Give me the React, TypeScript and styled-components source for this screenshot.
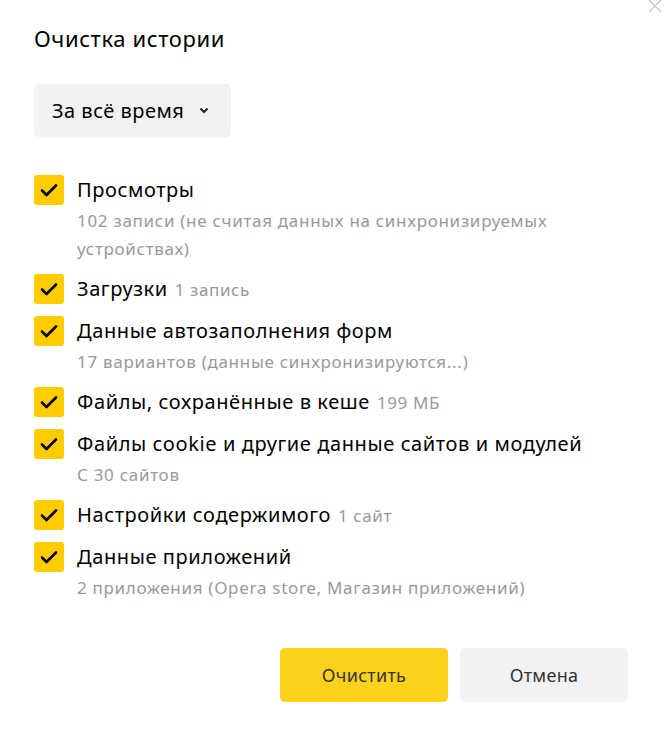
import React from "react";
import styled, { createGlobalStyle } from "styled-components";

const Global = createGlobalStyle`
  html, body { margin: 0; padding: 0; background: #fff; }
  body { font-family: "Noto Sans", "Open Sans", sans-serif; color: #000; }
`;

const Dialog = styled.div`
  position: relative;
  width: 670px;
  height: 733px;
  box-sizing: border-box;
  padding: 20px 42px 0 34px;
  display: flex;
  flex-direction: column;
`;

const Close = styled.button`
  position: absolute;
  top: -1px;
  right: 8px;
  width: 14px;
  height: 14px;
  padding: 0;
  border: 0;
  background: none;
  display: flex;
`;

const Title = styled.h1`
  margin: 0;
  font-size: 22px;
  font-weight: 400;
  line-height: 36px;
  letter-spacing: 0.6px;
`;

const Select = styled.button`
  margin-top: 28px;
  align-self: flex-start;
  height: 53px;
  width: 197px;
  box-sizing: border-box;
  padding: 0 18px;
  border: 0;
  border-radius: 5px;
  background: #f2f2f2;
  font-family: inherit;
  font-size: 20px;
  letter-spacing: 0.5px;
  color: #000;
  display: flex;
  align-items: center;
  gap: 15px;
`;

const List = styled.div`
  margin-top: 38px;
  display: flex;
  flex-direction: column;
  gap: 11px;
`;

const Row = styled.div`
  display: flex;
  gap: 13px;
  align-items: flex-start;
`;

const Box = styled.span`
  flex: none;
  width: 30px;
  height: 30px;
  border-radius: 3px;
  background: #ffcc00;
  display: flex;
  align-items: center;
  justify-content: center;
`;

const Texts = styled.div`
  display: flex;
  flex-direction: column;
`;

const Label = styled.div`
  font-size: 20px;
  line-height: 30px;
  color: #000;
  letter-spacing: 0.6px;
  white-space: nowrap;
`;

const Inline = styled.span`
  font-size: 17px;
  color: #999;
  letter-spacing: 0.6px;
  margin-left: 7px;
`;

const Sub = styled.div`
  margin-top: 2px;
  font-size: 17px;
  line-height: 28px;
  color: #999;
  letter-spacing: 0.7px;
  max-width: 490px;
`;

const Actions = styled.div`
  margin-top: 46px;
  display: flex;
  justify-content: flex-end;
  gap: 12px;
`;

const Button = styled.button<{ $primary?: boolean }>`
  width: 168px;
  height: 54px;
  border: 0;
  border-radius: 5px;
  font-family: inherit;
  font-size: 18px;
  letter-spacing: 0.3px;
  color: #333;
  background: ${(p) => (p.$primary ? "#fed21c" : "#f2f2f2")};
`;

const Check = () => (
  <svg width="18" height="14" viewBox="0 0 18 14">
    <path d="M2 7.5 L6.5 12 L16 2.5" fill="none" stroke="#000" strokeWidth="2.6" strokeLinecap="round" strokeLinejoin="round" />
  </svg>
);

const items: { label: string; inline?: string; sub?: string }[] = [
  { label: "Просмотры", sub: "102 записи (не считая данных на синхронизируемых устройствах)" },
  { label: "Загрузки", inline: "1 запись" },
  { label: "Данные автозаполнения форм", sub: "17 вариантов (данные синхронизируются...)" },
  { label: "Файлы, сохранённые в кеше", inline: "199 МБ" },
  { label: "Файлы cookie и другие данные сайтов и модулей", sub: "С 30 сайтов" },
  { label: "Настройки содержимого", inline: "1 сайт" },
  { label: "Данные приложений", sub: "2 приложения (Opera store, Магазин приложений)" },
];

export default function App() {
  return (
    <>
      <Global />
      <Dialog>
        <Close aria-label="Закрыть">
          <svg width="14" height="14" viewBox="0 0 14 14">
            <path d="M1 1 L13 13 M13 1 L1 13" stroke="#c8c8c8" strokeWidth="1.3" />
          </svg>
        </Close>
        <Title>Очистка истории</Title>
        <Select>
          За всё время
          <svg width="10" height="7" viewBox="0 0 10 7">
            <path d="M1.5 1.5 L5 5 L8.5 1.5" fill="none" stroke="#222" strokeWidth="2" />
          </svg>
        </Select>
        <List>
          {items.map((it) => (
            <Row key={it.label}>
              <Box>
                <Check />
              </Box>
              <Texts>
                <Label>
                  {it.label}
                  {it.inline && <Inline>{it.inline}</Inline>}
                </Label>
                {it.sub && <Sub>{it.sub}</Sub>}
              </Texts>
            </Row>
          ))}
        </List>
        <Actions>
          <Button $primary>Очистить</Button>
          <Button>Отмена</Button>
        </Actions>
      </Dialog>
    </>
  );
}
